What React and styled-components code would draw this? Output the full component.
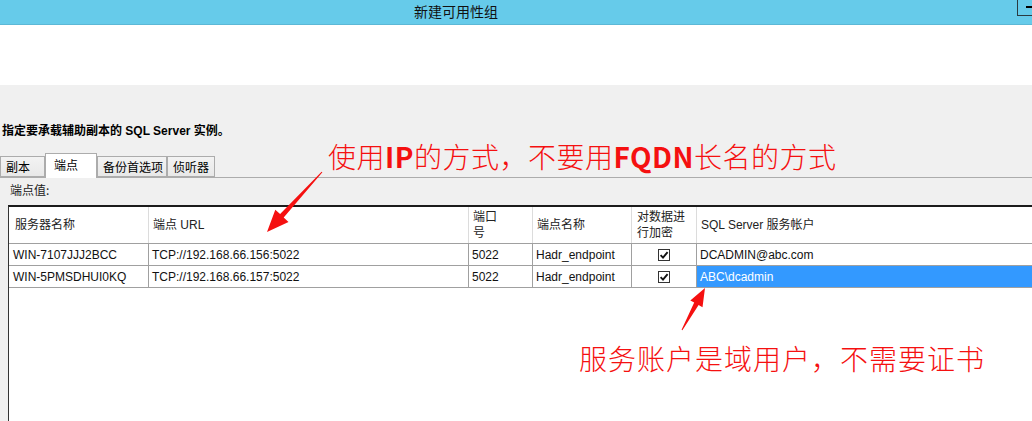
import React from "react";
import styled, { createGlobalStyle } from "styled-components";

const GlobalStyle = createGlobalStyle`
  html, body {
    margin: 0;
    padding: 0;
    background: #f0f0f0;
  }
  body {
    font-family: "Liberation Sans", "Noto Sans CJK SC", sans-serif;
    font-size: 12px;
    color: #000;
  }
`;

const columns = [
  { label: "服务器名称", width: 140, pad: 6 },
  { label: "端点 URL", width: 320 },
  { label: ["端口", "号"], width: 64 },
  { label: "端点名称", width: 99 },
  { label: ["对数据进", "行加密"], width: 65, pad: 5 },
  { label: "SQL Server 服务帐户", last: true },
];

const rows = [
  {
    server: "WIN-7107JJJ2BCC",
    url: "TCP://192.168.66.156:5022",
    port: "5022",
    name: "Hadr_endpoint",
    account: "DCADMIN@abc.com",
  },
  {
    server: "WIN-5PMSDHUI0KQ",
    url: "TCP://192.168.66.157:5022",
    port: "5022",
    name: "Hadr_endpoint",
    account: "ABC\\dcadmin",
    selected: true,
  },
];

const tabs = [
  { label: "副本", width: 45 },
  { label: "端点", width: 52, active: true },
  { label: "备份首选项", width: 70 },
  { label: "侦听器", width: 48 },
];

const Check = () => (
  <CheckBox>
    <svg width="10" height="10" viewBox="0 0 10 10">
      <path d="M1.6 5.2 L4 7.6 L8.6 2.2" fill="none" stroke="#111" strokeWidth="1.9" />
    </svg>
  </CheckBox>
);

const App = () => {
  return (
    <Page>
      <GlobalStyle />
      <TitleBar>
        <Title>新建可用性组</Title>
        <WinButton>
          <Dash />
        </WinButton>
      </TitleBar>
      <Banner />
      <Body>
        <Instruction>指定要承载辅助副本的 SQL Server 实例。</Instruction>
        <TabStrip>
          {tabs.map((t) => (
            <Tab key={t.label} $width={t.width} $active={t.active}>
              {t.label}
            </Tab>
          ))}
        </TabStrip>
        <TabPanel>
          <PanelLabel>端点值:</PanelLabel>
          <Grid>
            <HeadRow>
              {columns.map((c, i) => (
                <HeadCell key={i} $pad={c.pad} $last={c.last}>
                  {Array.isArray(c.label) ? (
                    <span>
                      {c.label[0]}
                      <br />
                      {c.label[1]}
                    </span>
                  ) : (
                    c.label
                  )}
                </HeadCell>
              ))}
            </HeadRow>
            {rows.map((r) => (
              <Row key={r.server}>
                <Cell $pad={4}>{r.server}</Cell>
                <Cell>{r.url}</Cell>
                <Cell>{r.port}</Cell>
                <Cell>{r.name}</Cell>
                <Cell $center>
                  <Check />
                </Cell>
                <Cell $selected={r.selected} $last>
                  {r.account}
                </Cell>
              </Row>
            ))}
          </Grid>
        </TabPanel>
      </Body>

      <NoteTop>
        使用<b>IP</b>的方式，不要用<b>FQDN</b>长名的方式
      </NoteTop>
      <NoteBottom>服务账户是域用户，不需要证书</NoteBottom>
      <Arrows width="1032" height="421" viewBox="0 0 1032 421">
        <polygon points="322.4,172.3 283.7,217.5 288.5,221.9 267,232 275.3,209.7 280.1,214.1 321.6,171.7" />
        <polygon points="682.4,330.2 698.6,305 702.5,307.2 705,288 690.3,300.4 694.2,302.6 681.6,329.8" />
      </Arrows>
    </Page>
  );
};

export default App;

const Page = styled.div`
position: relative;
width: 1032px;
height: 421px;
overflow: hidden;
background: #f0f0f0;
`;

const TitleBar = styled.div`
display: flex;
align-items: flex-start;
height: 25px;
box-sizing: border-box;
background: #66cbea;
border-bottom: 1px solid #5cb8d6;
`;

const Title = styled.div`
flex: 1;
padding-right: 105px;
text-align: center;
font-family: "Noto Sans CJK SC", sans-serif;
font-size: 14px;
line-height: 22px;
color: #111;
`;

const WinButton = styled.div`
width: 15px;
height: 16px;
box-sizing: border-box;
border-left: 1px solid #2a3a40;
border-bottom: 1px solid #2a3a40;
`;

const Dash = styled.div`
width: 8px;
height: 2px;
margin: 6px 0 0 8px;
background: #000;
`;

const Banner = styled.div`
height: 60px;
background: #fff;
`;

const Body = styled.div`
padding-top: 38px;
`;

const Instruction = styled.div`
padding-left: 2px;
font-weight: bold;
line-height: 16px;
height: 16px;
`;

const TabStrip = styled.div`
display: flex;
align-items: flex-end;
height: 25px;
margin-top: 14px;
box-sizing: border-box;
border-bottom: 1px solid #acacac;
`;

const Tab = styled.div`
width: ${(p) => p.$width}px;
height: ${(p) => (p.$active ? 25 : 21)}px;
margin-bottom: ${(p) => (p.$active ? -1 : 0)}px;
box-sizing: border-box;
padding-left: ${(p) => (p.$active ? 8 : 5)}px;
border: 1px solid #acacac;
border-bottom: ${(p) => (p.$active ? "none" : "1px solid #acacac")};
background: ${(p) => (p.$active ? "#fff" : "linear-gradient(#f3f3f3, #e8e8e8)")};
font-family: "Noto Sans CJK SC", sans-serif;
line-height: ${(p) => (p.$active ? 21 : 20)}px;
white-space: nowrap;
`;

const TabPanel = styled.div`
padding-top: 4px;
`;

const PanelLabel = styled.div`
padding-left: 10px;
line-height: 16px;
height: 16px;
font-family: "Noto Sans CJK SC", sans-serif;
color: #222;
`;

const Grid = styled.div`
margin: 7px 0 0 8px;
height: 300px;
background: #fff;
border-top: 2px solid #1b1b1b;
border-left: 1px solid #333;
`;

const rowColumns = "140px 320px 64px 99px 65px 1fr";

const HeadRow = styled.div`
display: grid;
grid-template-columns: ${rowColumns};
height: 37px;
box-sizing: border-box;
border-bottom: 1px solid #a0a0a0;
`;

const HeadCell = styled.div`
display: flex;
align-items: center;
padding-left: ${(p) => p.$pad ?? 4}px;
border-right: ${(p) => (p.$last ? "none" : "1px solid #dcdcdc")};
line-height: 16px;
color: #222;
white-space: nowrap;
`;

const Row = styled.div`
display: grid;
grid-template-columns: ${rowColumns};
height: 22px;
box-sizing: border-box;
border-bottom: 1px solid #a0a0a0;
`;

const Cell = styled.div`
display: flex;
align-items: center;
justify-content: ${(p) => (p.$center ? "center" : "flex-start")};
padding-left: ${(p) => (p.$center ? 0 : p.$pad ?? 3)}px;
border-right: ${(p) => (p.$last ? "none" : "1px solid #a0a0a0")};
background: ${(p) => (p.$selected ? "#3399ff" : "transparent")};
color: ${(p) => (p.$selected ? "#fff" : "#111")};
white-space: nowrap;
`;

const CheckBox = styled.div`
display: flex;
align-items: center;
justify-content: center;
width: 12px;
height: 12px;
box-sizing: border-box;
border: 1px solid #333;
background: #fff;
`;

const Note = styled.div`
position: absolute;
font-family: "Noto Sans CJK SC", sans-serif;
font-size: 28px;
font-weight: 300;
line-height: 30px;
color: #f51010;
white-space: nowrap;
b {
  font-weight: bold;
}
`;

const NoteTop = styled(Note)`
left: 328px;
top: 141px;
letter-spacing: 0.5px;
`;

const NoteBottom = styled(Note)`
left: 579px;
top: 343px;
letter-spacing: 1px;
`;

const Arrows = styled.svg`
position: absolute;
left: 0;
top: 0;
pointer-events: none;
fill: #f51010;
`;
